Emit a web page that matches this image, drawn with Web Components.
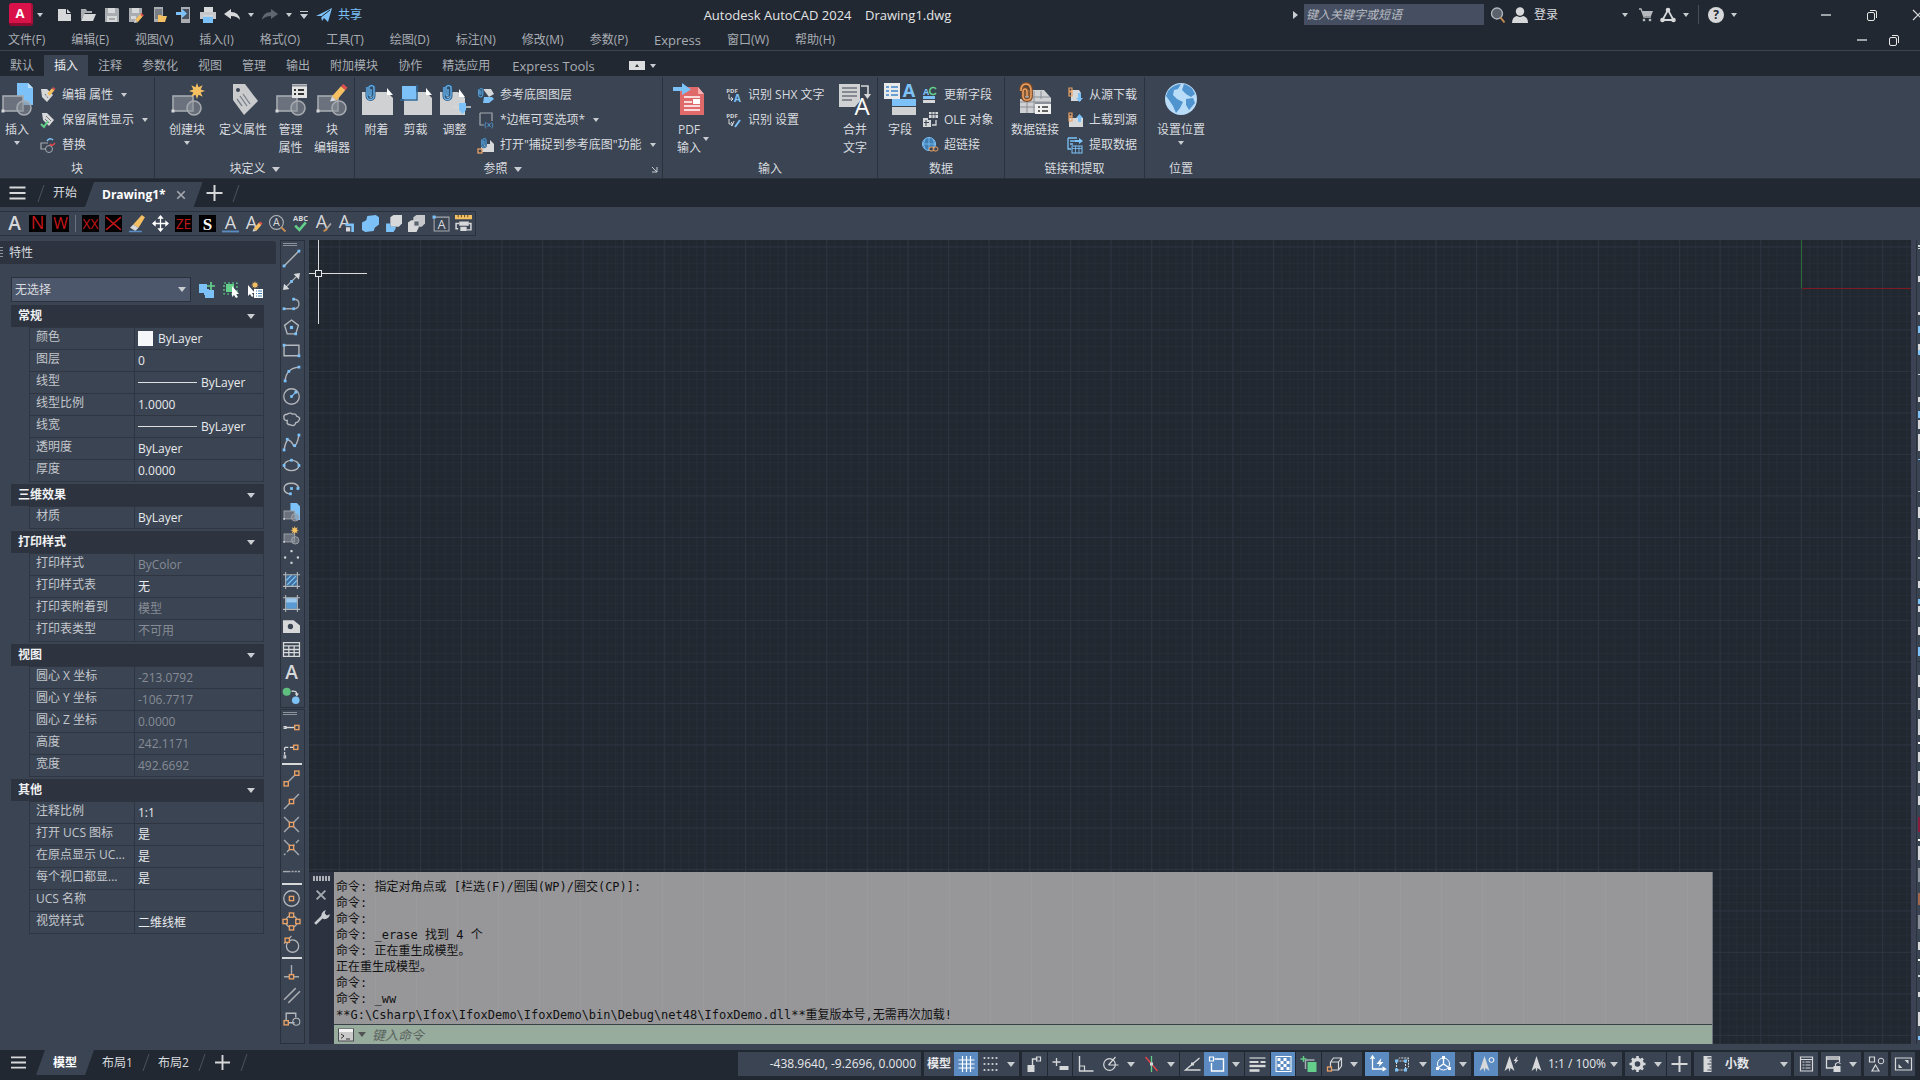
<!DOCTYPE html>
<html lang="zh-CN">
<head>
<meta charset="utf-8">
<title>Autodesk AutoCAD 2024 - Drawing1.dwg</title>
<style>
   :root {
      --dark: #222831;
      --panel: #3b4453;
      --line: #2b313c;
      --head: #2d333f;
      --text: #d8dbdf;
      --muted: #a8adb4;
      --active: #5b8bc0;
   }
   html, body {
      margin: 0;
      height: 100%;
   }
   body {
      background: var(--panel);
      color: var(--text);
      font: 12px/18px "Open Sans", "Noto Sans CJK SC", sans-serif;
      overflow: hidden;
   }
</style>
</head>
<body>
<cad-app></cad-app>

<script>
// ---------- icons ----------
const W = '#d6d8da';
const B = '#7cc2f8';
const G = '#63cf8b';
const O = '#e8a064';
const Y = '#f5c062';
const R = '#e5484d';

const dot = (x, y, c = B, s = 2.6) => `<rect x="${x - s / 2}" y="${y - s / 2}" width="${s}" height="${s}" fill="${c}"/>`;
const box = (x, y) => `<rect x="${x - 2}" y="${y - 2}" width="4" height="4" fill="#3b4453" stroke="${O}" stroke-width="1.3"/>`;
const ln = (d, c = W, w = 1.3, extra = '') => `<path d="${d}" fill="none" stroke="${c}" stroke-width="${w}" ${extra}/>`;
const fill = (d, c = W) => `<path d="${d}" fill="${c}"/>`;
const letter = (t, c = W, size = 15, x = 8, y = 13.5, extra = '') =>
   `<text x="${x}" y="${y}" font-size="${size}" fill="${c}" text-anchor="middle" font-family="Open Sans, sans-serif" ${extra}>${t}</text>`;
const black = '<rect width="16" height="16" fill="#000"/>';
const red = (t, size) => black + letter(t, '#c3161c', size, 8, 13.5);
const clip = (x, y) => {
   const d = `M${x} ${y + 3}v9a3.5 3.5 0 0 0 7 0v-9a3 3 0 0 0-5 0v8q1 2 2 0v-6`;
   return ln(d, '#27557c', 3) + ln(d, '#6fb4ea', 1.3);
};
const blk = `<rect x="2" y="13" width="20" height="15" fill="#6c727d" stroke="#a6aab0" stroke-width="1.6"/>` +
   `<circle cx="23" cy="25" r="7" fill="#8a8f98" fill-opacity=".55" stroke="#a6aab0" stroke-width="1.6"/>` + dot(2, 28, W, 3);
const pencil = (x, y, k = 1) => `<g transform="translate(${x} ${y}) scale(${k})">${fill('M0 16l2-5 4 4z', W)}${fill('M2 11L10 2l4 3.500L6 15z', Y)}${fill('M10 2l2-2 4 3.500-2 2z', '#e0504e')}</g>`;
const sun = (x, y, r) => {
   let d = '';
   for (let i = 0; i < 16; i++) {
      const q = i % 2 ? r * 0.5 : r;
      d += (i ? 'L' : 'M') + (x + q * Math.sin(i * Math.PI / 8)).toFixed(1) + ' ' + (y - q * Math.cos(i * Math.PI / 8)).toFixed(1);
   }
   return fill(d + 'z', Y);
};
const tri = fill('M8 0L13 15 9 12 8 16 7 12 3 15z');

const icons16 = {
   new: fill('M2 2h8v5h5v7H2z') + fill('M11 2l4 4h-4z'),
   open: fill('M1 2h5l1 2h5v2H5l-4 7z', '#a9acb0') + fill('M4 7h12l-3 7H1z'),
   save: fill('M1 1h13l1 1v13H1z', '#a9acb0') + fill('M4 1h7v5H4z') + fill('M3 9h10v6H3z') + ln('M5 12h6', '#777', 1),
   saveas: fill('M1 1h13v6L7 15H1z', '#a9acb0') + fill('M4 1h7v5H4z') + fill('M3 9h5v3H3z') + pencil(6, 6, 0.62),
   mobileopen: fill('M2 0h9v15H2z', '#a9acb0') + fill('M3 2h7v10H3z', '#777c85') + fill('M6 8h3l1 1h5l-2 6H6z', Y),
   mobilesave: fill('M5 0h9v16H5z', '#a9acb0') + fill('M6 2h7v10H6z', '#4b525f') + fill('M0 5h6V2l5 4.500L6 11V8H0z', B),
   print: fill('M4 0h9v5H4z') + fill('M0 5h16v7H0z', '#c5c7ca') + fill('M3 9h10v7H3z', B) + ln('M3 9h10', W, 1.5),
   undo: fill('M0 7l7-5v3q8 0 9 8-3-4-9-4v3z'),
   redo: fill('M16 7l-7-5v3q-8 0-9 8 3-4 9-4v3z', '#5f6670'),
   plane: fill('M0 9L16 1l-4 14-4-4-2 3-1-5z', B) + ln('M5 10L14 3', '#222831', 1),
   search: '<circle cx="7" cy="6.500" r="5.500" fill="#5c626c" stroke="#b5b8bc" stroke-width="1.3"/>' + ln('M10.500 10.500l4 5', '#c78d4e', 2),
   user: '<circle cx="8" cy="4.500" r="4.200" fill="#d6d8da"/>' + fill('M0 16q0-6 5-7 3 2 6 0 5 1 5 7z'),
   cart: ln('M1 2h2l3 8h7', '#b5b8bc', 1.3) + fill('M4 4h11l-2 5H6z', '#b5b8bc') + dot(6, 13, '#b5b8bc', 2.4) + dot(12, 13, '#b5b8bc', 2.4),
   adesk: ln('M2.500 13L8 3l5.500 10M3 13h10', W, 1.8) + '<circle cx="8" cy="3" r="2.300" fill="#d6d8da"/><circle cx="2.500" cy="13" r="2.300" fill="#d6d8da"/><circle cx="13.500" cy="13" r="2.300" fill="#d6d8da"/>',
   help: '<circle cx="8" cy="8" r="8" fill="#d6d8da"/>' + letter('?', '#222831', 12, 8, 12.3, 'font-weight="700"'),
   min: ln('M3 8h10', '#c9ccd0', 1.5),
   restore: '<rect x="3.500" y="5.500" width="7" height="8" rx="1.500" fill="none" stroke="#e6e6e6"/>' + ln('M6 3.500h5q1.500 0 1.500 1.500v6', '#e6e6e6', 1),
   close: ln('M3 3l10 10M13 3L3 13', '#d6d8da', 1.2),
   closetab: ln('M3 3l10 10M13 3L3 13', '#a6aab0', 2.2),
   menu: ln('M0 2.500h16M0 8h16M0 13.500h16', W, 2),
   plus: ln('M8 0v16M0 8h16', W, 2),
   editattr: fill('M1 2h6l6 6-6 7-5-5z', W) + ln('M5 7l3 4', '#777', 1) + pencil(6, 0, 0.6),
   keepattr: fill('M2 1h5l7 7-5 6-6-6z', W) + ln('M6 4l5 5M5 7l4 4', '#777', 1) + ln('M1 12l3 3 4-6', G, 2),
   replace: ln('M8 6H1v6h5', '#a6aab0', 1.2) + '<circle cx="9" cy="12" r="3.500" fill="none" stroke="#a6aab0"/>' + ln('M7 4q3-4 6-1', B, 1.5) + ln('M15 6q-3 4-5 1', R, 1.5),
   layers: fill('M5 2h8l3 5-5 3z', W) + fill('M6 10h8l2 2-5 4H5z', B) + `<g transform="scale(.6)">${clip(1, 1)}</g>`,
   frame: ln('M2 1h12v8M2 1v12h4', '#a6aab0', 1.2) + letter('(x)', '#5aa7e0', 8, 11, 14.500),
   osnapref: fill('M3 7h13v8H3z') + `<g transform="scale(.62) translate(5 0)">${clip(1, 1)}</g>` + fill('M12 3l4 4h-4z') + box(2, 14),
   pdfa: letter('PDF', W, 6, 6, 5.5, 'font-weight="700"') + ln('M3 7v5h3M5 10l2 2-2 2', W, 1) + letter('A', B, 10, 11.500, 15, 'font-weight="700"'),
   pdfset: letter('PDF', W, 6, 6, 5.5, 'font-weight="700"') + ln('M3 7v5h3M5 10l2 2-2 2', W, 1) + ln('M9 15l5-7', B, 2) + ln('M8 9l-2 5', W, 1),
   fieldup: letter('A', B, 9, 4, 7.500, 'font-weight="700"') + ln('M14 2a3.500 3.500 0 1 0 0 4', G, 1.6) + fill('M1 9h12v3H1z', B) + fill('M1 13h12v3H1z'),
   ole: fill('M7 0h9v6H7z') + ln('M7 2.500h9M10 0v6M13 0v6', '#3b4453', .8) + fill('M1 6h5v2h3v7H1z') + ln('M4 8v6M2 10.500h5', '#3b4453', 1) + ln('M14 8v5h-4', W, 1.3),
   link: '<circle cx="7" cy="7" r="6.500" fill="#3f7fb3" stroke="#7cc2f8"/>' + ln('M0 7h14M7 0v14M3 2q-3 5 0 10M11 2q3 5 0 10', B, .8) + '<rect x="7" y="10" width="5" height="4" rx="2" fill="#3b4453" stroke="#e8a064"/><rect x="11" y="10" width="5" height="4" rx="2" fill="none" stroke="#e8a064"/>',
   download: fill('M4 3h8l2 3v8H4z') + ln('M2 1h3v3H2zM2 5h3v4H2z', O, 1.2) + fill('M11 6h3v5h2l-3.500 4-3.500-4h2z', B),
   upload: fill('M2 6h14v9H2z') + ln('M2 1h3v3H2zM2 5h3v4H2z', O, 1.2) + fill('M11 10h3V6h2l-3.500-4L9 6h2z', B),
   extract: ln('M1 1h9M1 1v11h3M3 4h5M3 7h3', B, 1.3) + fill('M8 3h4V1l4 3-4 3V5H8z', B) + '<rect x="5" y="9" width="10" height="7" fill="#3b4453" stroke="#7cc2f8"/>' + ln('M5 11.500h10M8.500 9v7M12 9v7', B, .8),
   mtext: letter('A', W, 18, 8, 14.5, 'font-weight="600"'),
   n: red('N', 17), w: red('W', 15), xx: red('XX', 13),
   x: black + ln('M1 2l14 12M15 2L1 14', '#c3161c', 1.3),
   erase: fill('M4 9l8-9 3 2-6 10z', Y) + fill('M1 12l3-3 5 3-3 3z') + ln('M0 15.500h12', '#5b8bc0', 1.5),
   move: ln('M8 1v14M1 8h14', '#fff', 1.2) + fill('M8 0l3 3.500H5zM8 16l3-3.500H5zM0 8l3.500-3v6zM16 8l-3.500-3v6z', '#fff'),
   ze: red('ZE', 13),
   s: black + letter('S', '#fff', 16, 8, 14, 'font-weight="700" style="font-family:Liberation Serif"'),
   dtext: letter('A', W, 17, 8, 13) + ln('M0 15.500h16', '#5b8bc0', 1.8),
   edtext: letter('A', W, 17, 6, 13) + pencil(7, 6, 0.6),
   find: '<circle cx="7" cy="7" r="6.500" fill="none" stroke="#b5b8bc"/>' + letter('A', W, 10, 7, 10.5) + ln('M11.500 11.500l4 4', '#c78d4e', 1.8),
   spell: letter('ABC', W, 7, 8, 5.5, 'font-weight="700"') + ln('M3 10l4 4 6-7', G, 2.4),
   style: letter('A', W, 17, 6, 12.5) + ln('M10 14l5-6', '#b0a8a0', 1.6) + ln('M8 15q2 0 3-2', '#c78d4e', 2),
   scaletext: letter('A', W, 17, 6, 12.5) + '<rect x="7" y="8" width="8" height="8" fill="#7cc2f8"/><rect x="7" y="11" width="5" height="5" fill="#d6d8da" stroke="#3b4453"/>',
   union: fill('M5 1l8-1 3 2v7l-4 3-1 3-8 1-3-2V7l4-2z', B),
   subtract: fill('M5 2l3-2h8v8l-3 3H5z') + fill('M1 8h4v3h5v2l-2 3H1z', B),
   intersect: fill('M5 2l3-2h8v8l-3 3H5z', '#c5c7ca') + fill('M0 7l3-2h7v7l-2 4H0z') + fill('M6 6h4v4H6z', '#5b6470'),
   tframe: ln('M3 2h13v13H2V4', '#a6aab0', 1) + letter('A', W, 12, 9, 13) + dot(2, 2, B, 3),
   ruler: fill('M0 0h16v4H0z', Y) + ln('M3 0v2M6 0v2M9 0v2M12 0v2', '#6b5530', 1) + ln('M4 8H1v5h2M13 8h2v6h-4', W, 1.4) + fill('M4 6h9v4H4zM5 11h6v4H5z'),
   qselect: fill('M0 2h8v5h2v6H5v-2H0z', B) + fill('M6 8h9v8H6z', B) + ln('M12 0v8M8 4h8', G, 1.7),
   pick: ln('M1 1h13v11H1z', G, 1.2, 'stroke-dasharray="2 2"') + fill('M3 2h8v8H3z', G) + fill('M9 4v11l2-2 2 3 2-1-2-3h3z', '#fff'),
   quicksel: fill('M1 3v11l2-2 2 3 1.500-1L5 11h3z', '#fff') + sun(8, 3, 4) + fill('M7 7h9v9H7z', '#fff') + ln('M9 9h1M11 9h4M9 11.500h1M11 11.500h4M9 14h1M11 14h4', '#3f7fb3', 1.2),
   line: ln('M1 15L15 1', '#b5b8bc') + dot(1, 15) + dot(15, 1),
   xline: ln('M2 14L14 2', '#b5b8bc') + fill('M0 16l1-6 5 5zM16 0l-6 1 5 5z') + dot(8, 8),
   pline: ln('M1 12h8M10 3q5 0 5 4.500T10 12', '#a6aab0') + dot(1, 12) + dot(10, 12) + dot(10, 3),
   polygon: ln('M8 1l6.500 5-2.500 8H4L1.500 6z', '#b5b8bc') + dot(8, 8, B, 3) + dot(12, 14),
   rect: ln('M1 3h14v10H1z', '#b5b8bc') + dot(1, 3) + dot(15, 13),
   arc: ln('M2 15q1-12 13-13', '#b5b8bc') + dot(2, 15) + dot(5.500, 6) + dot(15, 2),
   circle: '<circle cx="8" cy="8" r="7.300" fill="none" stroke="#b5b8bc" stroke-width="1.200"/>' + ln('M8 8l4-4', B, 1) + dot(8, 8, B, 2.5) + dot(12, 4, B, 2.5),
   cloud: ln('M1 7q-1-4 3-4 3-2 5 0 3-1 4 2 4 1 2 4-1 2-3 2-1 4-5 2-4 0-3-4-3 0-3-2z', '#b5b8bc'),
   spline: ln('M1 15q2-11 5-9t4 5q3 1 5-10', '#b5b8bc') + dot(1, 15) + dot(4, 5) + dot(11, 11) + dot(15, 1),
   ellipse: '<ellipse cx="8" cy="8" rx="7" ry="4.800" fill="none" stroke="#b5b8bc" stroke-width="1.200"/>' + dot(1, 8) + dot(15, 8) + dot(8, 3),
   earc: ln('M15 8q-1-5-7-5-7 0-7 5 0 4 5 5', '#b5b8bc') + dot(8, 8) + dot(14, 8) + dot(7, 13),
   insblk: `<path d="M7 0h6l3 3v13h-4L7 8z" fill="${B}"/>` + `<g transform="scale(.5) translate(0 2)">${blk}</g>`,
   mkblk: `<g transform="scale(.5) translate(0 2)">${blk}</g>` + sun(11, 4, 4),
   point: dot(8, 2, W, 2) + dot(2, 8, W, 2) + dot(14, 8, W, 2) + dot(8, 13, W, 2),
   hatch: fill('M3 3h10v10H3z', '#3f6f9e') + ln('M3 8l5-5M4 12l8-8M8 13l5-5', B, 1) + ln('M0 2.500h16M0 13.500h16M2.500 0v16M13.500 0v16', '#b5b8bc', 1),
   grad: fill('M3 3h10v10H3z', '#5b9bd5') + fill('M3 3h10v4H3z', '#9cc8ee') + ln('M0 2.500h16M0 13.500h16M2.500 0v16M13.500 0v16', '#b5b8bc', 1),
   region: fill('M0 2h10l6 5v7H0z') + '<circle cx="7" cy="8" r="2.500" fill="#3b4453"/>',
   table: ln('M.5 1.500h15v13H.5zM.5 4.500h15M.5 8h15M.5 11h15M5.500 4.500v10M10.500 4.500v10', W, 1.2),
   addsel: '<circle cx="3.500" cy="4.500" r="3.800" fill="#5fbf7f"/><circle cx="12" cy="12.500" r="3.600" fill="#7cc2f8"/>' + ln('M8 4q5-1 5 3', W, 1.2) + fill('M11 6h4l-2 3z'),
   track: ln('M2 8h9') + ln('M1 7h2v2H1z', W, 1) + box(13, 8),
   from: ln('M2 5h9M1.500 5v7', W, 1.2, 'stroke-dasharray="3 1.500"') + ln('M1 13h1.500v2H1z', W, 1) + box(12, 5),
   endp: ln('M3 13L13 3', '#a6aab0') + box(3, 13) + box(13, 3),
   midp: ln('M1 15L15 1', '#a6aab0') + box(8, 8),
   inter: ln('M1 1l14 14M15 1L1 15', '#a6aab0') + box(8, 8),
   appint: ln('M1 1l14 14', '#a6aab0') + ln('M15 1L1 15', '#a6aab0', 1.3, 'stroke-dasharray="4 2"') + box(8, 8),
   ext: ln('M0 9h7', '#a6aab0') + ln('M8 9h8', '#a6aab0', 1.3, 'stroke-dasharray="2 1"'),
   cen: '<circle cx="8" cy="8" r="7.300" fill="none" stroke="#b5b8bc" stroke-width="1.200"/>' + box(8, 8),
   quad: '<circle cx="8" cy="8" r="5.500" fill="none" stroke="#b5b8bc" stroke-width="1.200"/>' + box(8, 2) + box(8, 14) + box(2, 8) + box(14, 8),
   tan: '<circle cx="9" cy="9.500" r="5.800" fill="none" stroke="#b5b8bc" stroke-width="1.200"/>' + ln('M1 7l7-7', '#a6aab0') + box(4, 4),
   perp: ln('M8 1v11M1 12h14', '#a6aab0') + box(8, 12),
   para: ln('M1 12L12 1M5 15L16 4', '#a6aab0', 1.5),
   insn: ln('M3 10V3h9v4M5 12h6', '#b5b8bc') + '<circle cx="12.500" cy="11" r="3.300" fill="none" stroke="#b5b8bc"/>' + box(3, 12),
   noden: box(8, 13),
   gridon: ln('M4 0v16M8 0v16M12 0v16M0 4h16M0 8h16M0 12h16', '#fff', 1.2),
   snapd: [2, 6, 10, 14].map(x => [2, 8, 14].map(y => dot(x, y, W, 1.8)).join('')).join(''),
   infer: fill('M1 9h7v7H1z') + ln('M6 9V3h5', W, 1.4) + ln('M10 1h4v4h-4z', W, 1.2),
   dyn: ln('M4 2v8M0 6h8', W, 1.3) + fill('M7 10h9v4H7z'),
   ortho: ln('M2 0v15h14', W, 1.4) + ln('M2 10h5v5', W, 1.2),
   polar: '<circle cx="7" cy="8.500" r="5.800" fill="none" stroke="#d6d8da" stroke-width="1.200"/>' + ln('M6 9l7-8M6 9h10', W, 1.2),
   iso: ln('M8 0v16', G, 1.3) + ln('M2 1l12 14', R, 1.3) + dot(8, 8, W, 3),
   angle: ln('M15 2L1 14h15', W, 1.4) + dot(8, 8, W, 3),
   osnap: ln('M6 3h9v12H3V7', '#fff', 1.4) + ln('M1 1h4v4H1z', '#fff', 1.2),
   lwt: ln('M0 2h16', W, 1.2) + ln('M0 6h9M11 6h5', W, 1.8) + ln('M0 10h16', W, 2.4) + ln('M0 14.500h10', W, 2.6),
   transp: '<rect x=".5" y=".5" width="15" height="15" fill="none" stroke="#fff"/>' + [0, 1, 2, 3].map(i => [0, 1, 2, 3].map(j => (i + j) % 2 ? '' : `<rect x="${2 + i * 3}" y="${2 + j * 3}" width="3" height="3" fill="#fff"/>`).join('')).join(''),
   cycle: fill('M7 6h9v10H7z', G) + ln('M5 4h9M5 4v9', '#a6aab0', 1.5) + ln('M3 0v6M0 3h6', G, 1.4),
   osnap3d: ln('M4 6l3-4h8v8l-3 4H5M4 6h8v8M12 6l3-4M4 6v5', W, 1.2) + box(3, 13),
   ucs: ln('M3 1v12h13M1 3l2-3 2 3M13 11l3 2-3 2', '#fff', 1.3) + fill('M12 2L7 8h3l-1 3 5-5h-3z', '#fff'),
   filter3d: ln('M2 5h9v9H2zM2 5l3-3h9v9l-3 3M11 5l3-3', W, 1, 'stroke-dasharray="2 1"') + dot(2, 5, B, 3) + dot(11, 5, B, 3) + dot(2, 14, B, 3) + dot(11, 14, B, 3),
   gizmo: ln('M8 1v7L2 12M8 8l6 4', '#fff', 1.4) + '<circle cx="8" cy="8" r="6" fill="none" stroke="#fff"/>' + dot(8, 1.5, '#fff', 3) + dot(2, 12.500, '#fff', 3) + dot(14, 12.500, '#fff', 3),
   annvis: `<g transform="translate(-2 0)">${tri}</g><circle cx="13" cy="4" r="2.400" fill="none" stroke="#fff"/>`,
   annauto: `<g transform="translate(-2 0)">${tri}</g>` + fill('M14 0l-4 5h2l-1 3 4-4h-2z'),
   ann: tri,
   gear: '<circle cx="8" cy="8" r="4.500" fill="none" stroke="#d6d8da" stroke-width="3.400"/>' + ln('M8 0v3M8 13v3M0 8h3M13 8h3M2.500 2.500l2 2M11.500 11.500l2 2M2.500 13.500l2-2M11.500 4.500l2-2', W, 2.6),
   units: fill('M4 0h8v16H4z') + ln('M8 2h4M10 5h2M8 8h4M10 11h2M8 14h4', '#3b4453', 1),
   props: ln('M2 1h12v14H2zM2 3.500h12', W, 1.2) + ln('M4 6h2M7 6h5M4 9h2M7 9h5M4 12h2M7 12h5', W, 1.2),
   lockui: ln('M9 12H1V1h13v5M1 3h13', W, 1.3) + fill('M8 10h7v6H8z') + ln('M10 10V8q3-3 5 0', W, 1.2),
   isolate: ln('M1 1h5v5H1z', W, 1.2) + '<circle cx="12.500" cy="5" r="2.800" fill="none" stroke="#d6d8da"/>' + ln('M7 9l3.500 6h-7z', W, 1.2),
   clean: ln('M0 2h16v12H0z', W, 1.2) + fill('M13 4v4L9 4zM3 12V8l4 4z'),
   wrench: ln('M2 14l7-7', '#c9ccd0', 2.600) + fill('M8 8Q7 3 12 1l-1 3 2 2 3-1q-1 5-6 4.500z', '#c9ccd0'),
   prompt: '<rect x="0.500" y="2" width="15" height="12" fill="#c9cac9" stroke="#4a4d52"/>' + fill('M1 2h14v3H1z', '#f3f3f3') + ln('M3 7l3 2-3 2.500M8 12h4', '#333', 1)
};

const icons32 = {
   insert: fill('M16 0h11l5 5v17H16z', B) + fill('M27 0v5h5z', '#bfe0fb') + blk,
   create: blk + sun(26, 8, 8),
   defattr: fill('M6 1h12l13 17-14 14L6 17z', '#c9cbcd') + '<circle cx="11" cy="7" r="2" fill="#3b4453"/>' + ln('M13 13l7 10M16 11l7 10M10 16l5 7', '#7a808a', 1.300),
   manattr: blk + fill('M17 1h15v14H17z', '#e4e4e4') + ln('M17 2.500h15', '#8a8f98', 2) + ln('M19 7h2M23 7h6M19 11h2M23 11h6', '#333', 1.800),
   blkedit: blk + pencil(14, 1, 1.1),
   attach: fill('M1 9h25l6 6v17H1z', '#cfd1d3') + fill('M26 5v7h6z', '#fff') + clip(6, 1),
   clipimg: fill('M4 9h22l6 6v17H4z', '#cfd1d3') + fill('M26 5v7h6z', '#fff') + '<rect x="2" y="3" width="14" height="13" fill="#7cc2f8"/>' + ln('M0 17h17V2', '#2f6b9c', 1.500),
   adjust: fill('M1 9h18l7 6v17H1z', '#cfd1d3') + fill('M20 6v8h6z', '#fff') + clip(5, 1) + ln('M14 24h18', W, 1.500) + fill('M20 20h7v7l-3.500 4-3.500-4z', B),
   pdf: fill('M7 4h18l6 7v21H7z', '#e06a6a') + fill('M25 4v7h6z', '#f7b3b3') + ln('M11 14h16M11 19h8M11 23h16M11 27h16', '#fff', 1.600) + fill('M20 16h7v5h-7z', '#fff') + fill('M0 4h9V0l9 6.500L9 12V8H0z', B),
   merge: fill('M0 1h21v17l-5 6H0z', '#cfd1d3') + ln('M3 5h15M3 9h15M3 13h15M3 17h10', '#6c727d', 1.300) + ln('M22 3h7v10', W, 1.600) + fill('M25 11h7l-3.500 5z') + letter('A', '#fff', 24, 23, 32),
   field: fill('M0 0h16v16H0z', '#e8eaec') + ln('M2 4h3M7 4h7M2 8h3M7 8h7M2 12h3M7 12h7', '#3f88c5', 1.600) + letter('A', B, 18, 25, 14, 'font-weight="700"') + fill('M8 16h24v7H8z', B) + fill('M8 24h24v8H8z', '#cfd1d3'),
   datalink: fill('M5 7h20l7 8v10H5z', '#cfd1d3') + fill('M1 16h18v14H1z', '#cfd1d3') + ln('M5 14h26M1 19h30M1 24h16M8 8v22M15 8v22M22 8v8', '#8a8f98', 1) + ln('M2 8q0-7 5-7t5 7v5q0 4-4 4t-4-4V9q0-3 2-3t2 3v4', '#7d4c26', 3.800) + ln('M2 8q0-7 5-7t5 7v5q0 4-4 4t-4-4V9q0-3 2-3t2 3v4', O, 1.600) + '<rect x="16" y="19" width="16" height="12" fill="#f0f0f0"/>' + ln('M19 24h2M23 24h6M19 28h2M23 28h6', '#333', 1.600) + ln('M16 20h16', '#8a8f98', 2),
   globe: '<circle cx="16" cy="16" r="16" fill="#b9dcf8"/>' + fill('M3 8q6-7 13-7l-3 5-4 1-1 5 4 4 6 3-3 6-4 5-3-7-4-6-3-4z', '#4f93cf') + fill('M19 1q8 2 11 10l-4 3-5-3-4-4zM21 16l7-1 2 5-6 7-3-5z', '#4f93cf')
};

class CadElement extends HTMLElement {
   constructor() {
      super();
      this.attachShadow({ mode: 'open' });
   }
   connectedCallback() {
      this.shadowRoot.innerHTML = this.render();
   }
   attr(name, fallback = '') {
      return this.getAttribute(name) || fallback;
   }
}

// resets for native controls, used by every element that has some
const controls = `
   button, a { all: unset; box-sizing: border-box; cursor: pointer; white-space: nowrap; }
   input, select { font: inherit; color: inherit; box-sizing: border-box; margin: 0; }
   nav, .row { display: flex; align-items: center; }
`;

class CadIcon extends CadElement {
   render() {
      const name = this.attr('name');
      const big = name in icons32;
      return `
         <style>
            :host { display: block; width: ${big ? 32 : 16}px; height: ${big ? 32 : 16}px; flex: none; }
            svg { display: block; width: 100%; height: 100%; overflow: visible; }
         </style>
         <svg viewBox="0 0 ${big ? '32 32' : '16 16'}" aria-hidden="true">${big ? icons32[name] : icons16[name]}</svg>`;
   }
}

class CadArrow extends CadElement {
   render() {
      return `
         <style>
            :host { display: block; flex: none; width: 0; height: 0; border: 3px solid transparent; border-top: 4px solid #c9ccd0; border-bottom: 0; }
            :host([large]) { border-left-width: 4px; border-right-width: 4px; border-top-width: 5px; }
            :host([right]) { border: 4px solid transparent; border-left: 5px solid #c9ccd0; border-right: 0; }
         </style>`;
   }
}

class CadTitleBar extends CadElement {
   render() {
      const quick = ['new', 'open', 'save', 'saveas', 'mobileopen', 'mobilesave', 'print', 'undo'];
      return `
         <style>
            ${controls}
            :host { display: flex; align-items: center; height: 29px; background: var(--dark); overflow: hidden; }
            .app { gap: 4px; margin-left: 9px; }
            .logo { width: 24px; height: 23px; background: #d9134a; border-bottom: 3px solid #8c0c30; border-right: 2px solid #a80f3a; border-radius: 3px;
               box-sizing: border-box; color: #fff; font-weight: 700; font-size: 13px; line-height: 18px; text-align: center; }
            .quick { gap: 8px; margin-left: 13px; }
            .custom { display: flex; flex-direction: column; align-items: center; gap: 2px; }
            .custom::before { content: ""; width: 8px; height: 1px; background: #c9ccd0; }
            .share { display: flex; align-items: center; gap: 6px; color: #7cc2f8; }
            h1 { flex: 1; margin: 0; font-size: 13px; font-weight: 400; line-height: 18px; text-align: center; white-space: pre; color: #e2e4e6; }
            .info { gap: 6px; flex: none; }
            input { width: 180px; height: 21px; padding: 0 2px; border: 0; background: #464f61; font-style: italic; }
            input::placeholder { color: #b9bdc4; opacity: 1; }
            .login { display: flex; align-items: center; gap: 6px; }
            .menu { display: flex; align-items: center; gap: 7px; }
            .account { margin-left: 58px; margin-right: 4px; }
            .sep { width: 1px; height: 19px; margin: 0 3px; background: #464d59; }
            .window { flex: none; margin-left: 66px; margin-right: -21px; }
            .window button { width: 46px; height: 29px; display: grid; place-items: center; }
         </style>
         <div class="row app"><button class="logo" aria-label="应用程序菜单">A</button><cad-arrow></cad-arrow></div>
         <div class="row quick">
            ${quick.map(n => `<button aria-label="${n}"><cad-icon name="${n}"></cad-icon></button>`).join('')}
            <cad-arrow></cad-arrow>
            <button aria-label="redo"><cad-icon name="redo"></cad-icon></button>
            <cad-arrow></cad-arrow>
            <button class="custom" aria-label="custom"><cad-arrow large></cad-arrow></button>
            <button class="share"><cad-icon name="plane"></cad-icon>共享</button>
         </div>
         <h1>Autodesk AutoCAD 2024    Drawing1.dwg</h1>
         <div class="row info">
            <cad-arrow right></cad-arrow>
            <input type="search" placeholder="键入关键字或短语" aria-label="搜索">
            <button aria-label="搜索"><cad-icon name="search"></cad-icon></button>
            <button class="login"><cad-icon name="user"></cad-icon>登录</button>
            <cad-arrow class="account"></cad-arrow>
            <button aria-label="cart"><cad-icon name="cart"></cad-icon></button>
            <button class="menu" aria-label="Autodesk"><cad-icon name="adesk"></cad-icon><cad-arrow></cad-arrow></button>
            <span class="sep"></span>
            <button class="menu" aria-label="help"><cad-icon name="help"></cad-icon><cad-arrow></cad-arrow></button>
         </div>
         <div class="row window">
            ${['min', 'restore', 'close'].map(n => `<button aria-label="${n}"><cad-icon name="${n}"></cad-icon></button>`).join('')}
         </div>`;
   }
}

class CadMenuBar extends CadElement {
   render() {
      const items = ['文件(F)', '编辑(E)', '视图(V)', '插入(I)', '格式(O)', '工具(T)', '绘图(D)', '标注(N)', '修改(M)', '参数(P)', 'Express', '窗口(W)', '帮助(H)'];
      return `
         <style>
            ${controls}
            :host { display: flex; justify-content: space-between; align-items: center; height: 21px; padding: 1px 18px 0 8px; box-sizing: content-box;
               height: 20px; background: var(--dark); border-bottom: 1px solid #3d4554; color: var(--muted); }
            nav { gap: 26px; }
            .latin { font-size: 13px; }
            .doc { gap: 16px; }
         </style>
         <nav>${items.map(t => `<button class="${t === 'Express' ? 'latin' : ''}">${t}</button>`).join('')}</nav>
         <div class="row doc">
            <button aria-label="min"><cad-icon name="min"></cad-icon></button>
            <button aria-label="restore"><cad-icon name="restore"></cad-icon></button>
         </div>`;
   }
}

class CadRibbonTabs extends CadElement {
   render() {
      const tabs = ['默认', '插入', '注释', '参数化', '视图', '管理', '输出', '附加模块', '协作', '精选应用', 'Express Tools'];
      return `
         <style>
            ${controls}
            :host { display: flex; align-items: flex-end; height: 25px; background: var(--dark); color: var(--muted); }
            button { padding: 0 10px; height: 21px; line-height: 22px; }
            button:first-child { padding-left: 6px; }
            button:nth-of-type(11) { font-size: 13px; padding: 0 12px; }
            .on { background: var(--panel); color: #eceef0; }
            .panelbtn { display: flex; align-items: center; gap: 5px; margin-left: 12px; }
            .panelbtn span { display: grid; place-items: center; width: 16px; height: 9px; background: #dcdddf; }
            i { border: 2px solid transparent; border-bottom: 3px solid #333; border-top: 0; }
         </style>
         ${tabs.map((t, i) => `<button class="${i === 1 ? 'on' : ''}">${t}</button>`).join('')}
         <button class="panelbtn" aria-label="最小化"><span><i></i></span><cad-arrow></cad-arrow></button>`;
   }
}

class CadRibbonPanel extends CadElement {
   render() {
      return `
         <style>
            :host { display: flex; flex-direction: column; box-sizing: border-box; height: 101px; margin-top: 1px; border-right: 1px solid var(--line); }
            :host([last]) { border: 0; }
            .body { display: flex; flex: 1; padding: 5px 3px 0 0; }
            footer { display: flex; align-items: center; justify-content: center; gap: 6px; height: 18px; line-height: 18px; }
            svg { margin-left: auto; margin-right: 4px; }
            .launch { flex: 1; display: flex; }
            .launch:last-child { padding-left: 12px; }
         </style>
         <div class="body"><slot></slot></div>
         <footer>
            ${this.hasAttribute('launcher') ? '<span class="launch"></span>' : ''}
            <span>${this.attr('label')}</span>
            ${this.hasAttribute('more') ? '<cad-arrow large></cad-arrow>' : ''}
            ${this.hasAttribute('launcher') ? '<span class="launch"><svg width="7" height="7" viewBox="0 0 7 7"><path d="M1 1l5 5M6 1v5H1" stroke="#c9ccd0" fill="none"/></svg></span>' : ''}
         </footer>`;
   }
}

class CadBigButton extends CadElement {
   render() {
      const side = this.attr('arrow') === 'side';
      return `
         <style>
            ${controls}
            :host { display: block; width: ${this.attr('width', '39')}px; flex: none; }
            button { display: flex; flex-direction: column; align-items: center; width: 100%; gap: 6px; padding-top: 1px; }
            .label { display: grid; grid-template-columns: 1fr auto 1fr; align-items: center; text-align: center; gap: 2px; }
            .text { grid-column: 2; }
            .text span { display: block; }
            .under { grid-column: 2; justify-self: center; }
         </style>
         <button>
            <cad-icon name="${this.attr('icon')}"></cad-icon>
            <span class="label">
               <span class="text">${this.attr('label').split('|').map(t => `<span>${t}</span>`).join('')}</span>
               ${this.hasAttribute('arrow') ? `<cad-arrow class="${side ? '' : 'under'}"></cad-arrow>` : ''}
            </span>
         </button>`;
   }
}

class CadSmallButton extends CadElement {
   render() {
      return `
         <style>
            ${controls}
            :host { display: block; }
            button { display: flex; align-items: center; gap: 6px; height: 25px; }
            cad-arrow { margin-left: 2px; }
         </style>
         <button>
            <cad-icon name="${this.attr('icon')}"></cad-icon>
            <slot></slot>
            ${this.hasAttribute('arrow') ? '<cad-arrow></cad-arrow>' : ''}
         </button>`;
   }
}

class CadRibbon extends CadElement {
   render() {
      return `
         <style>
            :host { display: flex; height: 102px; background: var(--panel); border-bottom: 1px solid var(--line); }
            .col { margin-left: 6px; }
            .rule { width: 1px; background: var(--line); margin: 0 11px 4px 4px; }
            .p1 { width: 155px; }
            .p2 { width: 200px; }
            .p3 { width: 308px; }
            .p4 { width: 215px; }
            .p5 { width: 127px; }
            .p6 { width: 140px; }
            .p7 { width: 72px; }
            .in { padding-left: 4px; }
            .near { padding-left: 2px; }
            .far { padding-left: 11px; }
         </style>
         <cad-ribbon-panel class="p1" label="块">
            <cad-big-button icon="insert" label="插入" arrow width="34"></cad-big-button>
            <div class="col">
               <cad-small-button icon="editattr" arrow>编辑 属性</cad-small-button>
               <cad-small-button icon="keepattr" arrow>保留属性显示</cad-small-button>
               <cad-small-button icon="replace">替换</cad-small-button>
            </div>
         </cad-ribbon-panel>
         <cad-ribbon-panel class="p2" label="块定义" more>
            <cad-big-button class="in" icon="create" label="创建块" arrow width="56"></cad-big-button>
            <cad-big-button icon="defattr" label="定义属性" width="56"></cad-big-button>
            <cad-big-button icon="manattr" label="管理|属性"></cad-big-button>
            <cad-big-button icon="blkedit" label="块|编辑器" width="44"></cad-big-button>
         </cad-ribbon-panel>
         <cad-ribbon-panel class="p3" label="参照" more launcher>
            <cad-big-button class="near" icon="attach" label="附着"></cad-big-button>
            <cad-big-button icon="clipimg" label="剪裁"></cad-big-button>
            <cad-big-button icon="adjust" label="调整"></cad-big-button>
            <div style="margin-left: 4px">
               <cad-small-button icon="layers">参考底图图层</cad-small-button>
               <cad-small-button icon="frame" arrow>*边框可变选项*</cad-small-button>
               <cad-small-button icon="osnapref" arrow>打开"捕捉到参考底图"功能</cad-small-button>
            </div>
         </cad-ribbon-panel>
         <cad-ribbon-panel class="p4" label="输入">
            <cad-big-button class="in" icon="pdf" label="PDF|输入" arrow="side" width="44"></cad-big-button>
            <div class="rule"></div>
            <div>
               <cad-small-button icon="pdfa">识别 SHX 文字</cad-small-button>
               <cad-small-button icon="pdfset">识别 设置</cad-small-button>
            </div>
            <cad-big-button class="far" icon="merge" label="合并|文字"></cad-big-button>
         </cad-ribbon-panel>
         <cad-ribbon-panel class="p5" label="数据">
            <cad-big-button icon="field" label="字段" width="44"></cad-big-button>
            <div>
               <cad-small-button icon="fieldup">更新字段</cad-small-button>
               <cad-small-button icon="ole">OLE 对象</cad-small-button>
               <cad-small-button icon="link">超链接</cad-small-button>
            </div>
         </cad-ribbon-panel>
         <cad-ribbon-panel class="p6" label="链接和提取">
            <cad-big-button class="near" icon="datalink" label="数据链接" width="56"></cad-big-button>
            <div style="margin-left: 4px">
               <cad-small-button icon="download">从源下载</cad-small-button>
               <cad-small-button icon="upload">上载到源</cad-small-button>
               <cad-small-button icon="extract">提取数据</cad-small-button>
            </div>
         </cad-ribbon-panel>
         <cad-ribbon-panel class="p7" label="位置" last>
            <cad-big-button icon="globe" label="设置位置" arrow width="72"></cad-big-button>
         </cad-ribbon-panel>`;
   }
}

class CadFileTabs extends CadElement {
   render() {
      return `
         <style>
            ${controls}
            :host { display: flex; align-items: center; height: 28px; padding-left: 9px; background: var(--dark); }
            .slash { width: 8px; height: 17px; }
            .slash path { stroke: #4b5361; fill: none; }
            .start { margin: 0 8px; }
            .tab { display: flex; align-items: center; gap: 9px; align-self: flex-end; height: 25px; padding: 0 16px 0 17px;
               background: var(--panel); clip-path: polygon(9px 0, 100% 0, calc(100% - 9px) 100%, 0 100%); font-weight: 700; color: #fff; }
            cad-icon { width: 17px; }
            .tab cad-icon { width: 12px; height: 12px; }
            .add { margin: 0 9px 0 3px; }
            .menu { margin-right: 11px; }
         </style>
         <button class="menu" aria-label="菜单"><cad-icon name="menu"></cad-icon></button>
         <svg class="slash" viewBox="0 0 8 17"><path d="M7 0L1 17"/></svg>
         <button class="start">开始</button>
         <button class="tab">Drawing1*<cad-icon name="closetab"></cad-icon></button>
         <button class="add" aria-label="新建"><cad-icon name="plus"></cad-icon></button>
         <svg class="slash" viewBox="0 0 8 17"><path d="M7 0L1 17"/></svg>`;
   }
}

class CadToolbar extends CadElement {
   render() {
      const first = ['mtext', 'n', 'w'];
      const rest = ['xx', 'x', 'erase', 'move', 'ze', 's', 'dtext', 'edtext', 'find', 'spell', 'style', 'scaletext', 'union', 'subtract', 'intersect', 'tframe', 'ruler'];
      const btn = n => `<button aria-label="${n}"><cad-icon name="${n}"></cad-icon></button>`;
      return `
         <style>
            ${controls}
            :host { display: block; padding: 4px 0; background: var(--panel); }
            .bar { display: flex; align-items: center; gap: 6px; width: 476px; height: 25px; box-sizing: border-box; padding: 0 3px 0 6px;
               border: 1px solid var(--line); border-left: 0; }
            .rest { flex: 1; justify-content: space-between; }
            .sep { width: 1px; height: 17px; background: #6a717d; }
            cad-icon { width: 17px; height: 17px; }
         </style>
         <div class="bar">${first.map(btn).join('')}<span class="sep"></span><div class="row rest">${rest.map(btn).join('')}</div></div>`;
   }
}

class CadPropGroup extends CadElement {
   render() {
      const rows = JSON.parse(this.attr('rows', '[]'));
      const cell = ([, value, kind]) => {
         if (kind === 'swatch') return `<span class="v"><i class="swatch"></i>${value}</span>`;
         if (kind === 'line') return `<span class="v line"><i></i>${value}</span>`;
         return value;
      };
      return `
         <style>
            ${controls}
            :host { display: block; }
            h3 { margin: 0; }
            h3 button { display: flex; justify-content: space-between; align-items: center; width: 100%; height: 22px; padding: 0 9px 0 7px;
               background: var(--head); font-size: 12px; font-weight: 700; color: #f0f1f2; }
            table { border-collapse: collapse; table-layout: fixed; width: 235px; margin-left: 18px; }
            th, td { height: 22px; box-sizing: border-box; padding: 0; border: 1px solid #2f3642; line-height: 18px; text-align: left; font-weight: 400; white-space: nowrap; }
            th { width: 105px; padding: 0 0 3px 6px; color: #c3c7cc; overflow: hidden; }
            td { padding-left: 3px; color: #e8eaec; }
            .off { color: #868c95; }
            .v { display: flex; align-items: center; gap: 5px; }
            .line { gap: 4px; }
            .swatch { width: 15px; height: 15px; background: #f6f7f9; }
            .line i { width: 59px; height: 1px; background: #e0e0e0; }
         </style>
         <h3><button>${this.attr('label')}<cad-arrow large></cad-arrow></button></h3>
         <table>${rows.map(r => `<tr><th scope="row">${r[0]}</th><td class="${r[2] === 'off' ? 'off' : ''}">${cell(r)}</td></tr>`).join('')}</table>`;
   }
}

class CadProperties extends CadElement {
   render() {
      const groups = [
         ['常规', [['颜色', 'ByLayer', 'swatch'], ['图层', '0'], ['线型', 'ByLayer', 'line'], ['线型比例', '1.0000'], ['线宽', 'ByLayer', 'line'], ['透明度', 'ByLayer'], ['厚度', '0.0000']]],
         ['三维效果', [['材质', 'ByLayer']]],
         ['打印样式', [['打印样式', 'ByColor', 'off'], ['打印样式表', '无'], ['打印表附着到', '模型', 'off'], ['打印表类型', '不可用', 'off']]],
         ['视图', [['圆心 X 坐标', '-213.0792', 'off'], ['圆心 Y 坐标', '-106.7717', 'off'], ['圆心 Z 坐标', '0.0000', 'off'], ['高度', '242.1171', 'off'], ['宽度', '492.6692', 'off']]],
         ['其他', [['注释比例', '1:1'], ['打开 UCS 图标', '是'], ['在原点显示 UC...', '是'], ['每个视口都显...', '是'], ['UCS 名称', ''], ['视觉样式', '二维线框']]]
      ];
      return `
         <style>
            ${controls}
            :host { display: block; box-sizing: border-box; width: 276px; padding-top: 1px; }
            header { display: flex; align-items: center; gap: 6px; height: 23px; background: var(--head); border-radius: 0 3px 0 0; }
            header i { width: 3px; height: 11px; background: repeating-linear-gradient(#8d939c 0 1px, transparent 1px 3px); }
            .pick { gap: 8px; margin: 13px 13px 3px 11px; }
            .drop { display: flex; align-items: center; flex: 1; }
            select { appearance: none; width: 100%; height: 25px; padding: 0 3px; background: #4d576b; border: 1px solid #2b313c; border-radius: 0; }
            .drop cad-arrow { margin-left: -13px; margin-right: 5px; pointer-events: none; }
            .groups { display: flex; flex-direction: column; gap: 2px; padding: 0 12px 0 11px; }
         </style>
         <header><i></i>特性</header>
         <div class="row pick">
            <div class="drop"><select aria-label="选择"><option>无选择</option></select><cad-arrow large></cad-arrow></div>
            ${['qselect', 'pick', 'quicksel'].map(n => `<button aria-label="${n}"><cad-icon name="${n}"></cad-icon></button>`).join('')}
         </div>
         <div class="groups">
            ${groups.map(([t, r]) => `<cad-prop-group label="${t}" rows='${JSON.stringify(r)}'></cad-prop-group>`).join('')}
         </div>`;
   }
}

class CadToolColumn extends CadElement {
   render() {
      const item = n => n === '-' ? '<span class="rule"></span>' : `<button aria-label="${n}"><cad-icon name="${n}"></cad-icon></button>`;
      return `
         <style>
            ${controls}
            :host { display: flex; flex-direction: column; align-items: flex-start; box-sizing: border-box; width: 25px; border: 1px solid var(--line); overflow: hidden; }
            :host([fill]) { flex: 1; min-height: 0; }
            .grip { flex: none; width: 14px; height: 1px; margin: 2px 0 0 2px; border: solid #8d939c; border-width: 1px 0; }
            button { display: grid; place-items: center; flex: none; width: 21px; height: 23px; }
            .grip + button { margin-top: 1px; }
            cad-icon { width: 17px; height: 17px; }
            .rule { flex: none; width: 20px; height: 2px; margin: 1px 0 2px 1px; background: #d6d8da; }
         </style>
         <span class="grip"></span>${this.attr('items').split(' ').map(item).join('')}`;
   }
}

// The toolbars docked on the right run past the window edge, only the left edge of each glyph shows
class CadEdgeStrip extends CadElement {
   render() {
      const marks = [[5, 2, W], [8, 1, W], [36, 6, W], [72, 3, W], [86, 7, B], [104, 6, W], [110, 5, B], [134, 1, W], [157, 5, W], [171, 7, B], [180, 9, W], [194, 17, W], [219, 1, B], [251, 1, W], [267, 11, W], [289, 11, W], [317, 2, W], [341, 7, W], [359, 5, B], [366, 6, W], [387, 8, W], [407, 9, B],
         [435, 12, W], [458, 12, W], [479, 16, W], [502, 2, '#fff'], [512, 10, W], [531, 12, W], [556, 9, W], [577, 15, '#8c1a3c'], [599, 2, '#fff'], [606, 14, W], [628, 14, '#8d929a'], [653, 12, '#a0674c'], [675, 14, '#8d929a'], [702, 8, W], [719, 2, '#fff'], [735, 2, W], [752, 5, W], [772, 14, W], [796, 4, B]];
      return `
         <style>
            :host { display: block; width: 5px; border-left: 4px solid #3c4254; border-right: 0; background: var(--panel); overflow: hidden; }
            svg { display: block; width: 5px; height: 100%; }
         </style>
         <svg aria-hidden="true"><path d="M1.500 0V1000M1 421.500h4" stroke="#2b313c" fill="none"/>
            ${marks.map(([y, h, c]) => `<rect x="3" y="${y}" width="2" height="${h}" fill="${c}"/>`).join('')}
         </svg>`;
   }
}

class CadDrawing extends CadElement {
   render() {
      return `
         <style>
            :host { display: grid; flex: 1; min-width: 0; min-height: 0; background: #212830; }
            svg, slot { grid-area: 1 / 1; }
            svg { width: 100%; height: 100%; }
            ::slotted(*) { grid-area: 1 / 1; align-self: end; margin-right: 198px; }
         </style>
         <svg aria-label="绘图区">
            <defs>
               <pattern id="minor" width="8.122" height="8.3" x="29.900" y="6.400" patternUnits="userSpaceOnUse">
                  <path d="M.5 0V9M0 .5H9" stroke="#262d37" fill="none"/>
               </pattern>
               <pattern id="major" width="40.61" height="41.5" x="29.900" y="6.400" patternUnits="userSpaceOnUse">
                  <path d="M.5 0V42M0 .5H41" stroke="#2d3440" fill="none"/>
               </pattern>
            </defs>
            <rect width="100%" height="100%" fill="url(#minor)"/>
            <rect width="100%" height="100%" fill="url(#major)"/>
            <path d="M1492.500 0V48" stroke="#2c6a3b"/>
            <rect x="1493" y="48" width="109" height="1" fill="#7d1a22"/>
            <path d="M9.500 0V30M9.500 36V84M0 33.500H6M12 33.500H58" stroke="#dcdcdc"/>
            <rect x="6.500" y="30.500" width="6" height="6" fill="#212830" stroke="#e6e6e6"/>
         </svg>
         <slot></slot>`;
   }
}

class CadCommandLine extends CadElement {
   render() {
      const history = [
         '命令: 指定对角点或 [栏选(F)/圈围(WP)/圈交(CP)]:',
         '命令:',
         '命令:',
         '命令: _erase 找到 4 个',
         '命令: 正在重生成模型。',
         '正在重生成模型。',
         '命令:',
         '命令: _ww',
         '**G:\\Csharp\\Ifox\\IfoxDemo\\IfoxDemo\\bin\\Debug\\net48\\IfoxDemo.dll**重复版本号,无需再次加载!'
      ];
      return `
         <style>
            ${controls}
            :host { display: flex; height: 172px; }
            .side { display: flex; flex-direction: column; align-items: center; gap: 7px; width: 24px; padding: 4px 1px 0 0; background: #2c323f; box-sizing: content-box; }
            .side i { width: 17px; height: 5px; background: repeating-linear-gradient(90deg, #aeb2b8 0 2px, transparent 2px 3px); }
            .side cad-icon { width: 14px; height: 14px; }
            .side button + button cad-icon { width: 17px; height: 17px; }
            .main { flex: 1; min-width: 0; display: flex; flex-direction: column; border-right: 1px solid #6f737c; }
            .log { flex: 1; padding: 7px 2px 0; background: #97979a; color: #111; font: 12px/16px "DejaVu Sans Mono", "Noto Sans CJK SC", monospace;
               background-image: repeating-linear-gradient(90deg, #9b9b9e 0 1px, transparent 1px 41px); }
            .log div { height: 16px; white-space: pre; }
            .entry { display: flex; align-items: center; gap: 4px; height: 20px; box-sizing: border-box; padding-left: 4px; background: #98ac9e; border-top: 1px solid #3a4048; }
            cad-arrow { filter: brightness(.4); }
            input { flex: 1; height: 18px; padding: 0 2px; border: 0; background: none; font-size: 13px; font-style: italic; color: #222; }
            input::placeholder { color: #5a635d; opacity: 1; }
         </style>
         <div class="side"><i></i>
            <button aria-label="close"><cad-icon name="closetab"></cad-icon></button>
            <button aria-label="options"><cad-icon name="wrench"></cad-icon></button>
         </div>
         <div class="main">
            <div class="log">${history.map(t => `<div>${t}</div>`).join('')}</div>
            <div class="entry"><cad-icon name="prompt"></cad-icon><cad-arrow large></cad-arrow><input type="text" placeholder="键入命令" aria-label="命令"></div>
         </div>`;
   }
}

class CadStatusBar extends CadElement {
   render() {
      // each group: gap before it, then [content, width, state] cells
      const groups = [
         [0, ['-438.9640, -9.2696, 0.0000', 183, 'end']],
         [3, ['模型', 30, 'bold'], ['@gridon', 24, 'on'], ['@snapd', 25], ['v', 16]],
         [3, ['@infer', 25]],
         [1, ['@dyn', 24]],
         [1, ['@ortho', 24], ['@polar', 26], ['v', 16], ['@iso', 24], ['v', 16]],
         [1, ['@angle', 24], ['@osnap', 24, 'on'], ['v', 16]],
         [1, ['@lwt', 25]],
         [1, ['@transp', 24, 'on']],
         [1, ['@cycle', 25]],
         [1, ['@osnap3d', 24], ['v', 16]],
         [3, ['@ucs', 24, 'on'], ['@filter3d', 26], ['v', 16], ['@gizmo', 24, 'on'], ['v', 16]],
         [3, ['@annvis', 24, 'on'], ['@annauto', 26], ['@ann', 24], ['1:1 / 100%', 58], ['v', 16]],
         [3, ['@gear', 25], ['v', 16]],
         [1, ['@plus', 24]],
         [3, ['@units', 26], ['小数', 57, 'start'], ['v', 14]],
         [3, ['@props', 24]],
         [3, ['@lockui', 24], ['v', 16]],
         [3, ['@isolate', 24]],
         [3, ['@clean', 24]]
      ];
      const cell = ([c, w, s = '']) => {
         const body = c === 'v' ? '<cad-arrow large></cad-arrow>' : c[0] === '@' ? `<cad-icon name="${c.slice(1)}"></cad-icon>` : c;
         const label = c === 'v' ? ' aria-label="更多"' : c[0] === '@' ? ` aria-label="${c.slice(1)}"` : '';
         return `<button class="${s}" style="width:${w}px"${label}>${body}</button>`;
      };
      return `
         <style>
            ${controls}
            :host { display: flex; justify-content: space-between; align-items: flex-start; height: 30px; background: var(--dark); }
            .tabs { height: 25px; padding-left: 10px; }
            .tabs cad-icon { width: 17px; height: 15px; }
            .tab { height: 25px; line-height: 25px; padding: 0 17px; margin: 0 8px 0 9px; background: var(--panel); font-weight: 700; color: #fff;
               clip-path: polygon(9px 0, 100% 0, calc(100% - 9px) 100%, 0 100%); }
            .slash { width: 8px; height: 17px; margin: 0 8px 0 9px; }
            .slash path { stroke: #4b5361; fill: none; }
            .right { padding: 2px 5px 0 0; }
            .group { display: flex; background: var(--panel); }
            .group button { display: flex; justify-content: center; align-items: center; height: 24px; color: #e6e8ea; }
            .group .on { background: var(--active); }
            .group .end { justify-content: flex-end; padding-right: 5px; }
            .group .start { justify-content: flex-start; padding-left: 5px; font-weight: 700; }
            .group .bold { font-weight: 700; }
            .group cad-icon { width: 17px; height: 16px; }
         </style>
         <nav class="tabs">
            <button aria-label="菜单"><cad-icon name="menu"></cad-icon></button>
            <button class="tab">模型</button>
            <button>布局1</button>
            <svg class="slash" viewBox="0 0 8 17"><path d="M7 0L1 17"/></svg>
            <button>布局2</button>
            <svg class="slash" viewBox="0 0 8 17"><path d="M7 0L1 17"/></svg>
            <button aria-label="新建布局"><cad-icon name="plus"></cad-icon></button>
            <svg class="slash" viewBox="0 0 8 17"><path d="M7 0L1 17"/></svg>
         </nav>
         <div class="row right">
            ${groups.map(([gap, ...cells]) => `<div class="group" style="margin-left:${gap}px">${cells.map(cell).join('')}</div>`).join('')}
         </div>`;
   }
}

class CadApp extends CadElement {
   render() {
      return `
         <style>
            :host { display: flex; flex-direction: column; height: 100vh; }
            main { display: flex; flex: 1; min-height: 0; gap: 4px; padding-bottom: 6px; }
            .tools { display: flex; flex-direction: column; gap: 1px; width: 25px; }
            .space { display: flex; flex: 1; min-width: 0; }
         </style>
         <cad-title-bar></cad-title-bar>
         <cad-menu-bar></cad-menu-bar>
         <cad-ribbon-tabs></cad-ribbon-tabs>
         <cad-ribbon></cad-ribbon>
         <cad-file-tabs></cad-file-tabs>
         <cad-toolbar></cad-toolbar>
         <main>
            <cad-properties></cad-properties>
            <div class="tools">
               <cad-tool-column items="line xline pline polygon rect arc circle cloud spline ellipse earc insblk mkblk point hatch grad region table mtext addsel"></cad-tool-column>
               <cad-tool-column fill items="track from - endp midp inter appint ext - cen quad tan - perp para insn noden"></cad-tool-column>
            </div>
            <div class="space">
               <cad-drawing><cad-command-line></cad-command-line></cad-drawing>
               <cad-edge-strip></cad-edge-strip>
            </div>
         </main>
         <cad-status-bar></cad-status-bar>`;
   }
}

customElements.define('cad-icon', CadIcon);
customElements.define('cad-arrow', CadArrow);
customElements.define('cad-title-bar', CadTitleBar);
customElements.define('cad-menu-bar', CadMenuBar);
customElements.define('cad-ribbon-tabs', CadRibbonTabs);
customElements.define('cad-ribbon-panel', CadRibbonPanel);
customElements.define('cad-big-button', CadBigButton);
customElements.define('cad-small-button', CadSmallButton);
customElements.define('cad-ribbon', CadRibbon);
customElements.define('cad-file-tabs', CadFileTabs);
customElements.define('cad-toolbar', CadToolbar);
customElements.define('cad-prop-group', CadPropGroup);
customElements.define('cad-properties', CadProperties);
customElements.define('cad-tool-column', CadToolColumn);
customElements.define('cad-edge-strip', CadEdgeStrip);
customElements.define('cad-drawing', CadDrawing);
customElements.define('cad-command-line', CadCommandLine);
customElements.define('cad-status-bar', CadStatusBar);
customElements.define('cad-app', CadApp);
</script>
</body>
</html>
